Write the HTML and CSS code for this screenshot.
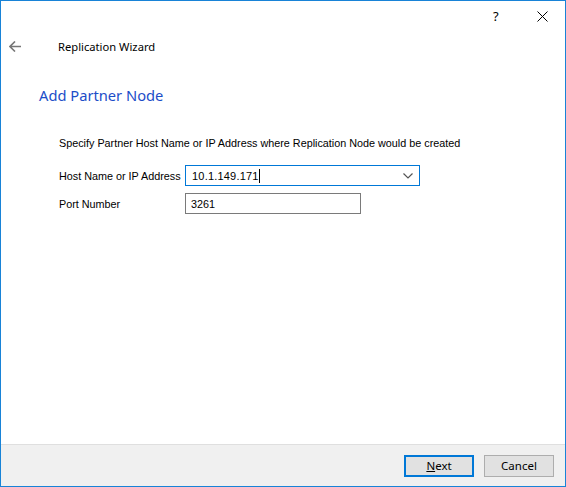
FILE: index.html
```html
<!DOCTYPE html>
<html>
<head>
<meta charset="utf-8">
<link rel="stylesheet" href="styles.css">
</head>
<body>
<div class="window">
  <div class="titlebar">
    <span class="help">?</span>
    <span class="close">
      <svg width="11" height="11" viewBox="0 0 11 11"><path d="M0.5 0.5 L10.5 10.5 M10.5 0.5 L0.5 10.5" stroke="#000" stroke-width="1" fill="none"/></svg>
    </span>
  </div>
  <div class="navbar">
    <svg class="back" width="12" height="11" viewBox="0 0 12 11"><path d="M6 0.5 L1 5.5 L6 10.5 M1 5.5 L12 5.5" stroke="#777" stroke-width="1.6" fill="none"/></svg>
    <span class="wizard">Replication Wizard</span>
  </div>
  <div class="content">
    <h1 class="heading">Add Partner Node</h1>
    <p class="intro">Specify Partner Host Name or IP Address where Replication Node would be created</p>
    <div class="row">
      <span class="label">Host Name or IP Address</span>
      <div class="combo">
        <span class="value ip">10.1.149.171</span><span class="caret"></span>
        <svg class="chev" width="10" height="6" viewBox="0 0 10 6"><path d="M0.5 0.5 L5 5 L9.5 0.5" stroke="#555" stroke-width="1.2" fill="none"/></svg>
      </div>
    </div>
    <div class="row">
      <span class="label">Port Number</span>
      <div class="textbox"><span class="value">3261</span></div>
    </div>
  </div>
  <div class="footer">
    <button class="btn primary"><u>N</u>ext</button>
    <button class="btn">Cancel</button>
  </div>
</div>
</body>
</html>
```
FILE: styles.css
```css
html, body {
  margin: 0;
  padding: 0;
  background: #fff;
}
.window {
  width: 566px;
  height: 487px;
  box-sizing: border-box;
  border: 1px solid #1883d7;
  display: flex;
  flex-direction: column;
  font-family: "Noto Sans", "DejaVu Sans", sans-serif;
  font-size: 12px;
  color: #000;
  background: #fff;
}
.titlebar {
  height: 30px;
  display: flex;
  justify-content: flex-end;
  align-items: center;
  padding-right: 17px;
}
.help {
  font-size: 13px;
  width: 11px;
  margin-right: 33px;
  margin-top: -1px;
}
.close {
  display: flex;
  width: 11px;
  height: 11px;
}
.navbar {
  height: 30px;
  display: flex;
  align-items: center;
  padding-left: 8px;
}
.back {
  margin-right: 37px;
}
.wizard {
  font-size: 11.2px;
}
.content {
  flex: 1;
  padding-left: 36px;
}
.heading {
  margin: 23px 0 0 2px;
  font-weight: normal;
  font-size: 14.7px;
  color: #1c4dc8;
  line-height: 22px;
}
.intro, .label, .value {
  font-family: "Liberation Sans", Arial, sans-serif;
  font-size: 10.8px;
}
.intro {
  margin: 29px 0 0 22px;
  line-height: 16px;
}
.row {
  display: flex;
  align-items: center;
  margin-left: 22px;
}
.row + .row {
  margin-top: 7px;
}
.intro + .row {
  margin-top: 14px;
}
.label {
  width: 126px;
  white-space: nowrap;
}
.combo, .textbox {
  box-sizing: border-box;
  height: 21px;
  display: flex;
  align-items: center;
  padding-left: 6px;
  position: relative;
}
.combo {
  width: 235px;
  border: 1px solid #0078d7;
}
.textbox {
  width: 176px;
  border: 1px solid #7a7a7a;
  padding-left: 5px;
}
.ip {
  font-size: 11px;
  letter-spacing: 0.2px;
}
.caret {
  width: 1px;
  height: 14px;
  background: #000;
  margin-left: 0px;
}
.chev {
  position: absolute;
  right: 6px;
  top: 7px;
}
.footer {
  height: 41px;
  border-top: 1px solid #dfdfdf;
  background: #f0f0f0;
  display: flex;
  justify-content: flex-end;
  align-items: center;
  padding-right: 11px;
  gap: 10px;
}
.btn {
  box-sizing: border-box;
  width: 70px;
  height: 22px;
  background: #e1e1e1;
  border: 1px solid #adadad;
  font-family: "Noto Sans", "DejaVu Sans", sans-serif;
  font-size: 11.5px;
  color: #000;
  padding: 0;
  margin: 0;
  line-height: 18px;
}
.btn.primary {
  border: 2px solid #0078d7;
}
```
